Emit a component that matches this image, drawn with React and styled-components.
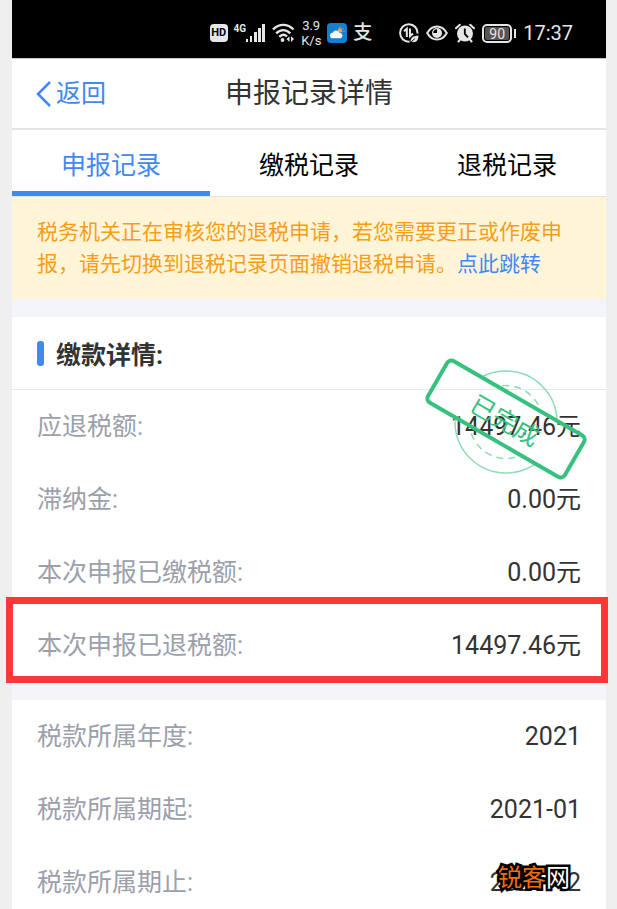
import React from "react";
import styled, { createGlobalStyle, css } from "styled-components";

const GlobalStyle = createGlobalStyle`
  * {
    box-sizing: border-box;
  }
  body {
    margin: 0;
    background-color: #efefef;
    font-family: Roboto, "Noto Sans CJK SC", sans-serif;
    color: #333;
  }
  button {
    border: 0;
    padding: 0;
    background: none;
    font: inherit;
    color: inherit;
    cursor: pointer;
  }
`;

const Screen = styled.div`
  position: relative;
  height: 100vh;
  padding: 0 11px 0 12px;
  overflow: hidden;
`;

const Phone = styled.div`
  background-color: white;
`;

const StatusBar = styled.div`
  height: 58px;
  padding: 8px 33px 0 0;
  display: flex;
  justify-content: flex-end;
  align-items: center;
  gap: 27px;
  background-color: black;
  color: #e6e6e6;
`;

const StatusGroup = styled.div`
  display: flex;
  align-items: center;
  gap: ${(props) => props.$gap}px;
  svg {
    display: block;
  }
`;

const HdBadge = styled.span`
  width: 18px;
  height: 18px;
  border-radius: 4px;
  background-color: #e6e6e6;
  color: black;
  font-size: 11px;
  font-weight: 700;
  line-height: 18px;
  text-align: center;
`;

const Signal = styled.span`
  display: flex;
  align-items: flex-start;
  font-size: 10px;
  font-weight: 700;
  line-height: 10px;
`;

const Speed = styled.span`
  width: 20px;
  font-size: 13px;
  line-height: 15px;
  text-align: center;
`;

const PayMark = styled.span`
  font-size: 19px;
  font-weight: 500;
  line-height: 20px;
`;

const Battery = styled.span`
  display: flex;
  align-items: center;
  gap: 2px;
  &::after {
    content: "";
    width: 2px;
    height: 9px;
    background-color: #e6e6e6;
  }
`;

const BatteryLevel = styled.span`
  width: 30px;
  height: 19px;
  padding: 1px;
  border: 2px solid #e6e6e6;
  border-radius: 5px;
  background-color: #555;
  background-clip: content-box;
  font-size: 14px;
  line-height: 14px;
  text-align: center;
`;

const Clock = styled.time`
  font-size: 20px;
  line-height: 24px;
`;

const NavBar = styled.header`
  height: 72px;
  padding: 0 24px;
  display: grid;
  grid-template-columns: 1fr auto 1fr;
  align-items: center;
  border-top: 1px solid #c8c8c8;
  border-bottom: 2px solid #e3e4e8;
`;

const BackButton = styled.button`
  display: flex;
  align-items: center;
  justify-self: start;
  gap: 5px;
  font-size: 25px;
  line-height: 36px;
  color: #4288f5;
`;

const Title = styled.h1`
  margin: 0;
  font-size: 28px;
  font-weight: 400;
  line-height: 40px;
`;

const Tabs = styled.nav`
  display: grid;
  grid-template-columns: repeat(3, 1fr);
  height: 67px;
  border-bottom: 1px solid #e3e4e8;
`;

const Tab = styled.button`
  padding-top: 5px;
  border-bottom: 5px solid transparent;
  font-size: 25px;
  color: black;
  ${(props) =>
    props.$active &&
    css`
      color: #4288f5;
      border-bottom-color: #4288f5;
    `}
`;

const Notice = styled.p`
  margin: 0;
  padding: 19px 25px;
  background-color: #fef5d9;
  font-size: 21px;
  line-height: 32px;
  color: #fa9d16;
  a {
    color: #4288f5;
    text-decoration: none;
  }
`;

const Section = styled.section`
  position: relative;
  border-top: 18px solid #f4f5fa;
`;

const SectionTitle = styled.h2`
  margin: 0;
  height: 73px;
  padding: 0 25px;
  display: flex;
  align-items: center;
  gap: 12px;
  border-bottom: 1px solid #e6e8ea;
  font-size: 25px;
  font-weight: 700;
  &::before {
    content: "";
    width: 7px;
    height: 25px;
    border-radius: 3px;
    background-color: #4288f5;
  }
`;

const List = styled.dl`
  margin: 0;
`;

const Row = styled.div`
  position: relative;
  height: 73px;
  padding: 1px 25px 0;
  display: flex;
  justify-content: space-between;
  align-items: center;
  font-size: 25px;
  line-height: 36px;
  dt {
    color: #9ba0aa;
  }
  dd {
    margin: 0;
  }
  ${(props) =>
    props.$marked &&
    css`
      &::after {
        content: "";
        position: absolute;
        top: -12px;
        right: -2px;
        bottom: -1px;
        left: -6px;
        border: 7px solid #fb3838;
        pointer-events: none;
        z-index: 1;
      }
    `}
`;

const StampBox = styled.div`
  position: absolute;
  top: 38px;
  right: 15px;
  pointer-events: none;
  svg {
    display: block;
  }
`;

const SiteMark = styled.div`
  position: absolute;
  right: 47px;
  bottom: 13px;
  font-size: 24px;
  line-height: 36px;
  color: #ee6c0a;
  -webkit-text-stroke: 5px black;
  paint-order: stroke fill;
  span {
    color: white;
  }
`;

const SignalIcon = () => (
  <svg width="20" height="19" viewBox="0 0 20 19" fill="#e6e6e6" aria-hidden="true">
    <rect x="0" y="15" width="2" height="3" />
    <rect x="4" y="12" width="2" height="6" />
    <rect x="8" y="8" width="3" height="10" />
    <rect x="12" y="4" width="3" height="14" />
    <rect x="16" y="0" width="3" height="18" />
  </svg>
);

const WifiIcon = () => (
  <svg width="23" height="20" viewBox="0 0 23 20" fill="none" stroke="#e6e6e6" strokeWidth="2.4" aria-hidden="true">
    <path d="M1 6.500C7 .3 15.500 .3 21.500 6.500" />
    <path d="M4.200 10.300C8.500 6 14 6 18.300 10.300" />
    <path d="M7.300 13.800C9.800 11.300 12.800 11.300 15 13.500" />
    <circle cx="10.500" cy="17" r="1.900" fill="#e6e6e6" stroke="none" />
    <path d="M17.500 13.300V19l-3-2.900zM19 13.300V19l3-2.900z" fill="#e6e6e6" stroke="none" />
  </svg>
);

const WeatherIcon = () => (
  <svg width="20" height="20" viewBox="0 0 20 20" aria-hidden="true">
    <rect width="20" height="20" rx="4" fill="#1381cf" />
    <circle cx="13" cy="7.500" r="2.300" fill="#f4a259" />
    <path d="M13 3.500v1.300M16.500 5l-1 1M17.500 8.300h-1.200" stroke="#f4a259" strokeWidth="1" />
    <path d="M6 15.300a2.800 2.800 0 0 1-.3-5.600 3.600 3.600 0 0 1 6.700.4 2.700 2.700 0 0 1 1.300 5.200z" fill="#f2f7fb" />
  </svg>
);

const DataSaverIcon = () => (
  <svg width="20" height="20" viewBox="0 0 20 20" fill="none" stroke="#e6e6e6" strokeWidth="2" aria-hidden="true">
    <path d="M18.500 10.500A8.700 8.700 0 1 0 10.500 18.600" />
    <path d="M5 8.300l2.800-2.600V14M11 5.500v7.700l3-2.800" />
    <path d="M11.500 18.500c0-4 3-5.800 8-6-.2 5-2.500 7.500-6 6.500z" fill="#e6e6e6" stroke="none" />
    <path d="M11.800 19.500l4-4" stroke="black" strokeWidth="1" />
  </svg>
);

const EyeIcon = () => (
  <svg width="22" height="16" viewBox="0 0 22 16" fill="none" aria-hidden="true">
    <path d="M1.200 8C6 -.7 16 -.7 20.800 8 16 16.700 6 16.700 1.200 8z" stroke="#e6e6e6" strokeWidth="2" />
    <circle cx="11" cy="8" r="5" fill="#e6e6e6" />
    <path d="M11 8V4.300A3.700 3.700 0 0 0 7.300 8z" fill="black" />
  </svg>
);

const AlarmIcon = () => (
  <svg width="20" height="20" viewBox="0 0 20 20" aria-hidden="true">
    <circle cx="10" cy="10.500" r="8" fill="#e6e6e6" />
    <path d="M9.800 5.500V11l3.200 3.300" fill="none" stroke="black" strokeWidth="1.800" />
    <path d="M1 5.300L4.800 1.800M19 5.300l-3.800-3.500M3.500 18.500l1.500-1.800M16.500 18.500L15 16.700" stroke="#e6e6e6" strokeWidth="2" strokeLinecap="round" />
  </svg>
);

const ChevronLeft = () => (
  <svg width="15" height="26" viewBox="0 0 15 26" fill="none" stroke="#4288f5" strokeWidth="2.500" aria-hidden="true">
    <path d="M14 1L2 13l12 12" />
  </svg>
);

// the circles are only drawn outside of the tilted frame
const Stamp = () => (
  <StampBox>
    <svg width="170" height="130" viewBox="0 0 170 130" role="img" aria-label="已完成">
      <mask id="outside-frame">
        <rect width="170" height="130" fill="white" />
        <rect x="6" y="40" width="158" height="48" fill="black" transform="rotate(30 85 64)" />
      </mask>
      <g fill="none" stroke="#8cdcb4" strokeWidth="1.500" mask="url(#outside-frame)">
        <circle cx="85" cy="67" r="51" />
        <circle cx="85" cy="67" r="36.500" strokeDasharray="7 5" />
      </g>
      <g transform="rotate(30 85 64)">
        <rect x="6" y="40" width="158" height="48" rx="5" fill="none" stroke="#36c27e" strokeWidth="4" />
        <text x="85" y="75" textAnchor="middle" fontSize="25" fill="#36c27e">
          已完成
        </text>
      </g>
    </svg>
  </StampBox>
);

const tabs = ["申报记录", "缴税记录", "退税记录"];

const payment = [
  { label: "应退税额:", value: "14497.46元" },
  { label: "滞纳金:", value: "0.00元" },
  { label: "本次申报已缴税额:", value: "0.00元" },
  { label: "本次申报已退税额:", value: "14497.46元", marked: true },
];

const period = [
  { label: "税款所属年度:", value: "2021" },
  { label: "税款所属期起:", value: "2021-01" },
  { label: "税款所属期止:", value: "2021-12" },
];

const Rows = ({ items }) => (
  <List>
    {items.map(({ label, value, marked }) => (
      <Row key={label} $marked={marked}>
        <dt>{label}</dt>
        <dd>{value}</dd>
      </Row>
    ))}
  </List>
);

export default function App() {
  return (
    <>
      <GlobalStyle />
      <Screen>
        <Phone>
          <StatusBar>
            <StatusGroup $gap={6}>
              <HdBadge>HD</HdBadge>
              <Signal>
                4G
                <SignalIcon />
              </Signal>
              <WifiIcon />
              <Speed>3.9 K/s</Speed>
              <WeatherIcon />
              <PayMark>支</PayMark>
            </StatusGroup>
            <StatusGroup $gap={7}>
              <DataSaverIcon />
              <EyeIcon />
              <AlarmIcon />
              <Battery>
                <BatteryLevel>90</BatteryLevel>
              </Battery>
              <Clock>17:37</Clock>
            </StatusGroup>
          </StatusBar>
          <NavBar>
            <BackButton type="button">
              <ChevronLeft />
              返回
            </BackButton>
            <Title>申报记录详情</Title>
          </NavBar>
          <Tabs>
            {tabs.map((tab, i) => (
              <Tab key={tab} type="button" $active={i === 0}>
                {tab}
              </Tab>
            ))}
          </Tabs>
          <Notice>
            税务机关正在审核您的退税申请，若您需要更正或作废申报，请先切换到退税记录页面撤销退税申请。
            <a href="#refund">点此跳转</a>
          </Notice>
          <Section>
            <SectionTitle>缴款详情:</SectionTitle>
            <Rows items={payment} />
            <Stamp />
          </Section>
          <Section>
            <Rows items={period} />
          </Section>
        </Phone>
        <SiteMark>
          锐客<span>网</span>
        </SiteMark>
      </Screen>
    </>
  );
}
